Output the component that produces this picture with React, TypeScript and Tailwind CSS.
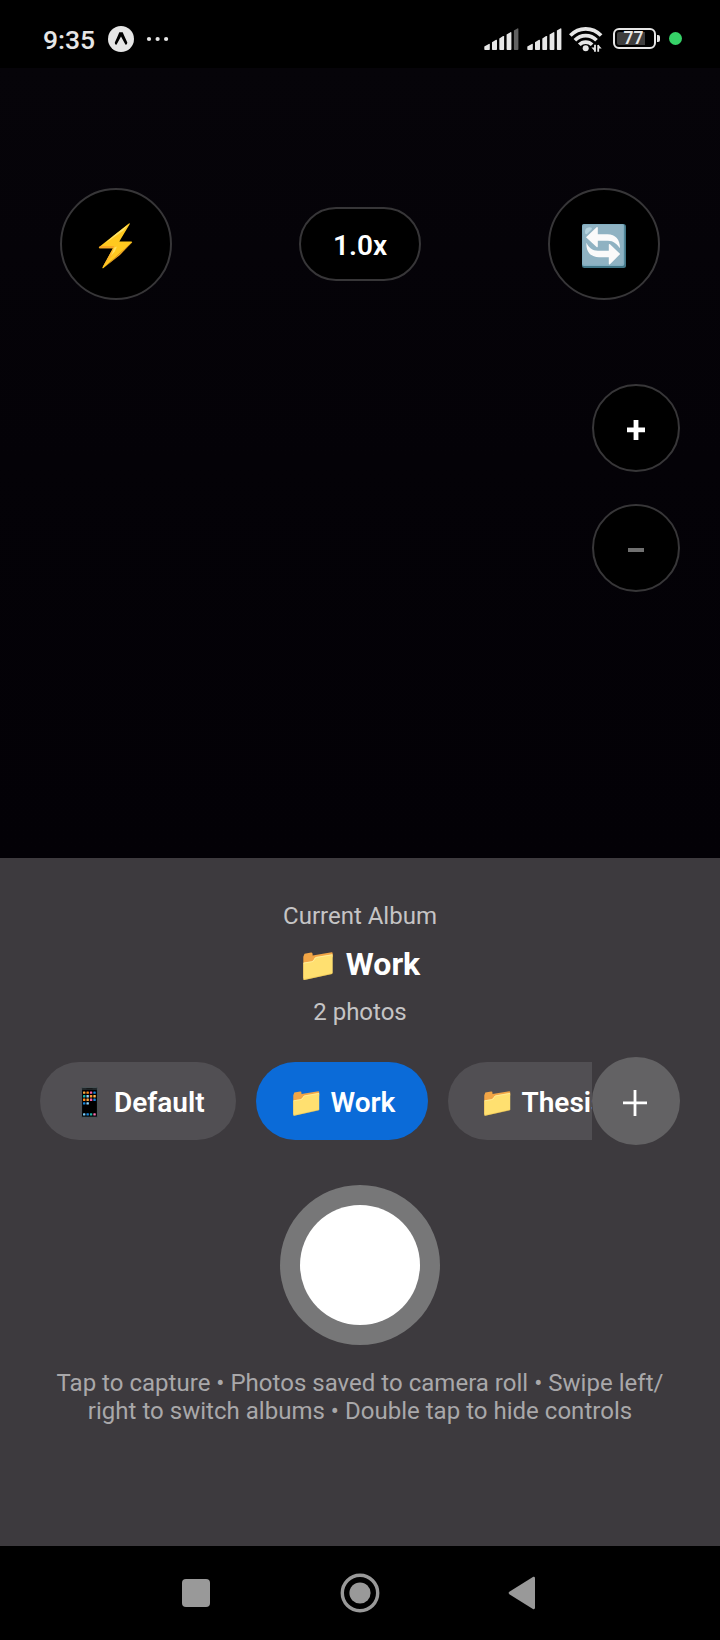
import type { ReactNode } from "react";

function SignalBars({ dimLast = false }: { dimLast?: boolean }) {
  return (
    <svg width="36" height="24" viewBox="0 0 36 24" fill="#e6e6e6">
      <path d="M0.3 18.6 4.8 15.9Q5.8 15.5 5.8 16.5V21.2Q5.8 22 5 22H1.1Q0.3 22 0.3 21.2Z" />
      <path d="M8 14.2 12 11.8Q13 11.4 13 12.4V21.2Q13 22 12.2 22H8.8Q8 22 8 21.2Z" />
      <path d="M15.3 10.4 19.1 8Q20.1 7.6 20.1 8.6V21.2Q20.1 22 19.3 22H16.1Q15.3 22 15.3 21.2Z" />
      <path d="M22.6 6.6 26.4 4.2Q27.4 3.8 27.4 4.8V21.2Q27.4 22 26.6 22H23.4Q22.6 22 22.6 21.2Z" />
      <path fill={dimLast ? "#616161" : "#e6e6e6"} d="M29.9 2.6 33.4 0.4Q34.4 0 34.4 1V21.2Q34.4 22 33.6 22H30.7Q29.9 22 29.9 21.2Z" />
    </svg>
  );
}

function Wifi() {
  return (
    <svg width="34" height="28" viewBox="0 0 34 28" fill="none" stroke="#e6e6e6" strokeWidth="3.7">
      <path d="M1.3 10.6C9.8 1.6 23.6 1.6 32.1 10.6" />
      <path d="M5.9 15.3C11.9 9 21.5 9 27.5 15.3" />
      <path d="M10.3 19.8C13.8 16.1 19.6 16.1 23.1 19.8" />
      <circle cx="16.7" cy="23.2" r="3" fill="#e6e6e6" stroke="none" />
      <path d="M26 26.7V19.8M29.2 20V26.7" strokeWidth="1.8" />
      <path d="M22.4 22.6 26 26.6V22.6ZM29 19.6 32.7 23.6H29Z" fill="#e6e6e6" stroke="none" />
    </svg>
  );
}

function StatusBar() {
  return (
    <header className="flex h-[68px] shrink-0 items-center bg-black pt-[9px] pr-[38px] pl-[43px]">
      <span className="mt-[2px] w-[65px] text-[26.5px] leading-[32px] font-medium text-[#e6e6e6]">9:35</span>
      <svg width="26" height="26" viewBox="0 0 26 26">
        <circle cx="13" cy="13" r="13" fill="#e6e6e6" />
        <path d="M11.3 6.3H14.7Q17.6 13 19.3 16.4 19.5 18.5 17.5 18.7L13 10.6 8.5 18.7Q6.5 18.5 6.8 16.4 9 12 11.3 6.3Z" fill="#000" />
      </svg>
      <svg className="ml-[12px]" width="24" height="6" viewBox="0 0 24 6" fill="#e6e6e6">
        <circle cx="3" cy="3" r="2.1" />
        <circle cx="11.6" cy="3" r="2.1" />
        <circle cx="20.1" cy="3" r="2.1" />
      </svg>
      <div className="ml-auto flex items-center">
        <div className="mt-[2px]"><SignalBars dimLast /></div>
        <div className="mt-[2px] ml-[7px]"><SignalBars /></div>
        <div className="ml-[6px] flex"><Wifi /></div>
        <div className="ml-[10px] flex items-center">
          <div className="flex h-[21px] w-[43px] rounded-[6px] border-2 border-[#e6e6e6] p-[2px]">
            <div className="flex w-[28px] items-center justify-center rounded-l-[2px] bg-[#3d3d3d] pl-[5px] text-[17.5px] font-semibold text-[#e6e6e6]">77</div>
          </div>
          <div className="ml-px h-[7px] w-[3px] rounded-r-[2px] bg-[#e6e6e6]" />
        </div>
        <div className="ml-[9px] size-[13px] rounded-full bg-[#36d268]" />
      </div>
    </header>
  );
}

function Bolt() {
  return (
    <svg className="mt-[4px]" width="36" height="48" viewBox="0 0 36 48">
      <path d="M31.2 1.2 1.1 25.1Q0.3 26.3 1.7 26.3H15L4.4 45.5Q4.3 46.7 5.5 46.1L34 20.6Q34.6 19.4 33.2 19.4H21.3L31.8 2Q32 1 31.2 1.2Z" fill="#ffc91f" />
      <path d="M30.5 2.3 15.9 13.5 7 21.5 25.4 8.6Z" fill="#ffe56b" />
      <path d="M1.1 25.1Q0.3 26.3 1.7 26.3H15L16.3 24H2.5Z" fill="#f9a825" />
      <path d="M4.4 45.5 15 26.3 18.8 24.2 14.2 34Z" fill="#fdb82a" />
      <path d="M34 20.2 25.4 27.9 5.5 46.1 22 33 34 20.6Z" fill="#f5a623" />
      <path d="M16.3 25.6 19 24.5 16.8 29.5 13 34Z" fill="#ffe25c" />
    </svg>
  );
}

function FlipArrows() {
  return (
    <svg width="44" height="44" viewBox="0 0 44 44">
      <rect width="44" height="44" rx="2.5" fill="#427687" />
      <rect width="42.3" height="42" rx="2" fill="#82aec0" />
      <rect x="1" y="1" width="40" height="39.8" rx="2" fill="#8fb2c2" />
      <path d="M3 8Q3 3.5 7.5 3.2 10.5 3.2 9.8 5.2L5 10Q3 11 3 8Z" fill="#b5d3df" />
      <path d="M4 13.3 14.6 3.2Q15.8 2.5 15.8 4V10.3H25.5C33.5 10.3 38.2 15.8 38 24.3 34.8 20 31.5 16.7 26 16.7H15.8V22.3Q15.8 23.7 14.6 23Z" fill="#fafafa" />
      <path d="M4.5 18.8C6.5 23.5 10.3 26.8 16 26.8H26.8V20.9Q26.8 19.5 28 20.3L38.2 30 28 40.2Q26.8 41 26.8 39.5V33.2H17C8.5 33.2 3.8 27.4 4.5 18.8Z" fill="#fafafa" />
    </svg>
  );
}

function Folder({ size }: { size: number }) {
  return (
    <svg width={size} height={size * 0.9333} viewBox="0 0 30 28">
      <path d="M0.3 4.8 1.5 1.8 8.2 0.5Q9.5 0.4 9.6 2V3.4L28.7 0.3Q29.7 0.3 29.7 1.5V5L1 26.5.3 26Z" fill="#f2a545" />
      <path d="M0.3 11.3Q0.4 10.6 1.2 10.4L8.3 9.4Q10.3 9 10.8 7.5 11.4 5.4 13.3 5L28.8 2.4Q29.7 2.3 29.7 3.3V20.6Q29.7 21.6 28.7 21.9L1.3 27.9Q0.3 28 0.3 27Z" fill="#ffe070" />
      <path d="M0.6 11.1 8.3 9.8Q10.8 9.5 11.3 7.5 11.8 5.8 13.3 5.4L29.5 2.7" fill="none" stroke="#fff3ad" strokeWidth="0.7" />
      <path d="M0.4 27.7 28.7 21.7Q29.6 21.5 29.6 20.6" fill="none" stroke="#e8bd48" strokeWidth="0.5" />
    </svg>
  );
}

function Phone() {
  const colors = [
    ["#f9a73e", "#ff8a1c", "#f45fa3", "#1688e0"],
    ["#1cb6a6", "#8fd8ff", "#ff9830", "#ffb84d"],
    ["#ff8a1c", "#f4a742", "#f45fa3", "#1688e0"],
    ["#1688e0", "#8fd8ff"],
  ];
  return (
    <svg width="17" height="31" viewBox="0 0 17 31">
      <rect x="0.5" y="0.5" width="16" height="30" rx="1.3" fill="#20272a" stroke="#485154" />
      <rect x="1.2" y="3" width="14.6" height="26.3" fill="#000" />
      <path d="M5.5 1.7H11.5" stroke="#111" strokeWidth="0.8" />
      {colors.map((row, y) => row.map((c, x) => (
        <rect key={`${x}-${y}`} x={2 + x * 3.45} y={4.4 + y * 3.6} width="2.4" height="2.4" rx="0.5" fill={c} />
      )))}
      {["#74c8f5", "#1688e0", "#1cb6a6", "#f46fae"].map((c, x) => (
        <rect key={c} x={2 + x * 3.45} y="26.2" width="2.4" height="2.4" rx="0.5" fill={c} />
      ))}
    </svg>
  );
}

function RoundButton({ children, large = false, label }: { children: ReactNode; large?: boolean; label: string }) {
  return (
    <button aria-label={label} className={`flex items-center justify-center rounded-full border-2 border-[#373638] bg-black ${large ? "size-[112px]" : "size-[88px]"}`}>
      {children}
    </button>
  );
}

function AlbumTab({ icon, name, tone }: { icon: ReactNode; name: string; tone: string }) {
  return (
    <button className={`flex h-[78px] shrink-0 items-center rounded-full text-[28px] leading-[33px] font-semibold text-white ${tone}`}>
      {icon}
      <span className="mt-[3px]">{name}</span>
    </button>
  );
}

export default function App() {
  return (
    <div className="flex h-[1640px] w-[720px] flex-col overflow-hidden bg-[#040207] font-['Roboto',sans-serif]">
      <StatusBar />
      <main className="flex h-[790px] shrink-0 flex-col bg-linear-to-b from-[#060409] via-[#040207] to-[#030106] pt-[120px]">
        <div className="flex items-center justify-between px-[60px]">
          <RoundButton large label="Flash"><Bolt /></RoundButton>
          <button className="flex h-[74px] w-[122px] items-center justify-center rounded-full border-2 border-[#373638] bg-black pt-[3px] text-[28px] font-semibold text-white">1.0x</button>
          <RoundButton large label="Flip"><div className="pt-[3px]"><FlipArrows /></div></RoundButton>
        </div>
        <div className="mt-[84px] flex flex-col items-end gap-8 pr-10">
          <RoundButton label="Zoom in">
            <svg className="mt-[4px]" width="18" height="20" viewBox="0 0 18 20"><path d="M9 0V20M0 9.8H18" stroke="#fff" strokeWidth="4.8" /></svg>
          </RoundButton>
          <RoundButton label="Zoom out">
            <div className="mt-[3px] h-[4px] w-[16px] bg-[#707070]" />
          </RoundButton>
        </div>
      </main>
      <section className="flex h-[688px] shrink-0 flex-col items-center bg-[#3d3a3e] pt-[44px]">
        <p className="text-[24px] leading-[28px] text-[#c5c4c5]">Current Album</p>
        <h1 className="mt-[15px] ml-[3px] flex h-[38px] items-center text-[32px] leading-[38px] font-bold text-white">
          <div className="mt-[4px] mr-[13px]"><Folder size={30} /></div>
          Work
        </h1>
        <p className="mt-[15px] text-[24px] leading-[28px] text-[#c5c4c5]">2 photos</p>
        <div className="mt-[31px] flex h-[88px] w-full items-center px-10">
          <div className="flex w-[552px] gap-5 overflow-hidden">
            <AlbumTab tone="w-[196px] bg-[#514f53] pl-[41px]" name="Default" icon={<div className="mt-[3px] mr-[16px]"><Phone /></div>} />
            <AlbumTab tone="w-[172px] bg-[#0b6bd8] pl-[37px]" name="Work" icon={<div className="mt-[5px] mr-[11px]"><Folder size={26.5} /></div>} />
            <AlbumTab tone="w-[184px] bg-[#514f53] pl-[36px]" name="Thesis" icon={<div className="mt-[5px] mr-[11px]"><Folder size={26.5} /></div>} />
          </div>
          <button aria-label="Add album" className="flex size-[88px] shrink-0 items-center justify-center rounded-full bg-[#636264]">
            <svg className="mt-[4px] mr-[2px]" width="24" height="26" viewBox="0 0 24 26"><path d="M12 0V26M0 12.8H24" stroke="#fff" strokeWidth="2.8" /></svg>
          </button>
        </div>
        <button aria-label="Capture" className="mt-[40px] flex size-[160px] items-center justify-center rounded-full bg-[#777778]">
          <div className="size-[120px] rounded-full bg-white" />
        </button>
        <p className="mt-[24px] text-center text-[24px] leading-[28px] tracking-[0.02px] text-[#a9a8aa]">
          Tap to capture • Photos saved to camera roll • Swipe left/<br />right to switch albums • Double tap to hide controls
        </p>
      </section>
      <nav className="flex grow items-center bg-black pl-[182px]">
        <div className="size-[28px] rounded-[4px] bg-[#999]" />
        <svg className="ml-[130px]" width="40" height="40" viewBox="0 0 40 40">
          <circle cx="20" cy="20" r="17.7" fill="none" stroke="#999" strokeWidth="3.4" />
          <circle cx="20" cy="20" r="10.6" fill="#999" />
        </svg>
        <svg className="ml-[128px]" width="28" height="34" viewBox="0 0 28 34">
          <path d="M25.3 0.8 1.3 15.8Q0 17 1.3 18.2L25.3 33.2Q27 33.5 27 31.8V2.2Q27 0.5 25.3 0.8Z" fill="#999" />
        </svg>
      </nav>
    </div>
  );
}
